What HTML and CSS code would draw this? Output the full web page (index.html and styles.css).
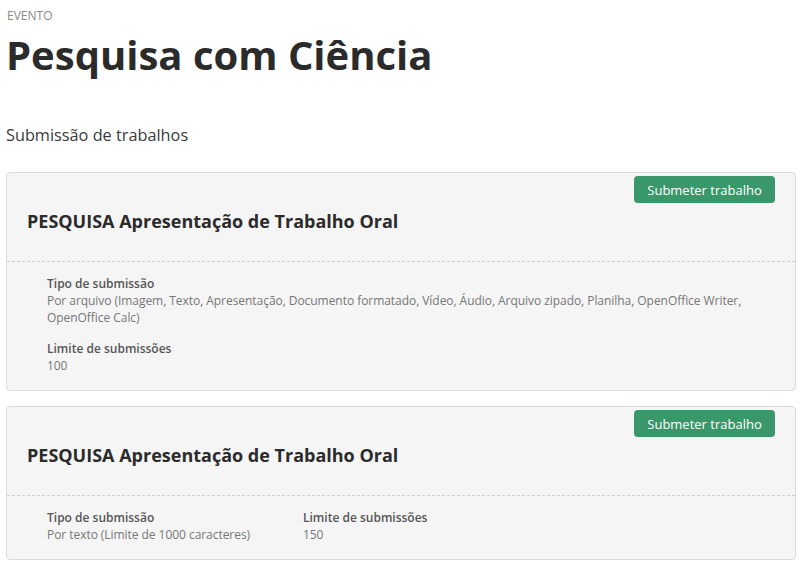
FILE: index.html
```html
<!DOCTYPE html>
<html>
<head>
    <title>Pesquisa com Ciência - Submissão de trabalhos</title>
    <meta charset="UTF-8">
    <link rel="stylesheet" href="styles.css">
</head>
<body>
    <div class="overline">EVENTO</div>
    <h1>Pesquisa com Ciência</h1>

    <h2 class="section-title">Submissão de trabalhos</h2>

    <div class="card">
        <div class="card-header">
            <button class="btn-submit">Submeter trabalho</button>
            <h3>PESQUISA Apresentação de Trabalho Oral</h3>
        </div>
        <div class="card-body">
            <div class="field">
                <div class="label">Tipo de submissão</div>
                <div class="value">Por arquivo (Imagem, Texto, Apresentação, Documento formatado, Vídeo, Áudio, Arquivo zipado, Planilha, OpenOffice Writer, OpenOffice Calc)</div>
            </div>
            <div class="field">
                <div class="label">Limite de submissões</div>
                <div class="value">100</div>
            </div>
        </div>
    </div>

    <div class="card">
        <div class="card-header">
            <button class="btn-submit">Submeter trabalho</button>
            <h3>PESQUISA Apresentação de Trabalho Oral</h3>
        </div>
        <div class="card-body columns">
            <div class="field">
                <div class="label">Tipo de submissão</div>
                <div class="value">Por texto (Limite de 1000 caracteres)</div>
            </div>
            <div class="field">
                <div class="label">Limite de submissões</div>
                <div class="value">150</div>
            </div>
        </div>
    </div>
</body>
</html>
```

FILE: styles.css
```css
body {
    font-family: "Open Sans", sans-serif;
    color: #333;
    margin: 0;
    padding: 7px 8px 0 6px;
    background: #fff;
}
.overline {
    font-size: 12px;
    line-height: 17px;
    color: #888;
    padding-left: 1px;
}
h1 {
    font-size: 40px;
    font-weight: 700;
    line-height: 50px;
    margin: 6px 0 0 0;
    color: #2b2b2b;
}
.section-title {
    font-size: 16.3px;
    font-weight: 400;
    line-height: 22px;
    margin: 44px 0 0 0;
    color: #3a3a3a;
}
.card {
    background: #f5f5f5;
    border: 1px solid #dcdcdc;
    border-radius: 4px;
    margin-top: 26px;
}
.card + .card {
    margin-top: 15px;
}
.card-header {
    display: flex;
    flex-direction: column;
    padding: 3px 20px 0 20px;
    border-bottom: 1px dashed #cfcfcf;
}
.btn-submit {
    align-self: flex-end;
    width: 141px;
    background: #3a976a;
    color: #fff;
    border: none;
    border-radius: 4px;
    font-family: "Open Sans", sans-serif;
    font-size: 13px;
    height: 27px;
    padding: 0;
    cursor: pointer;
}
.card-header h3 {
    font-size: 18px;
    font-weight: 700;
    line-height: 25px;
    margin: 6px 0 0 0;
    padding-bottom: 27px;
    color: #2b2b2b;
}
.card-body {
    padding: 13px 20px 16px 40px;
}
.card-body.columns {
    display: grid;
    grid-template-columns: 256px auto;
}
.field + .field {
    margin-top: 14px;
}
.columns .field + .field {
    margin-top: 0;
}
.label {
    font-size: 12px;
    line-height: 17px;
    font-weight: 600;
    color: #555;
}
.value {
    font-size: 12px;
    line-height: 17px;
    letter-spacing: -0.05px;
    color: #777;
}
```
